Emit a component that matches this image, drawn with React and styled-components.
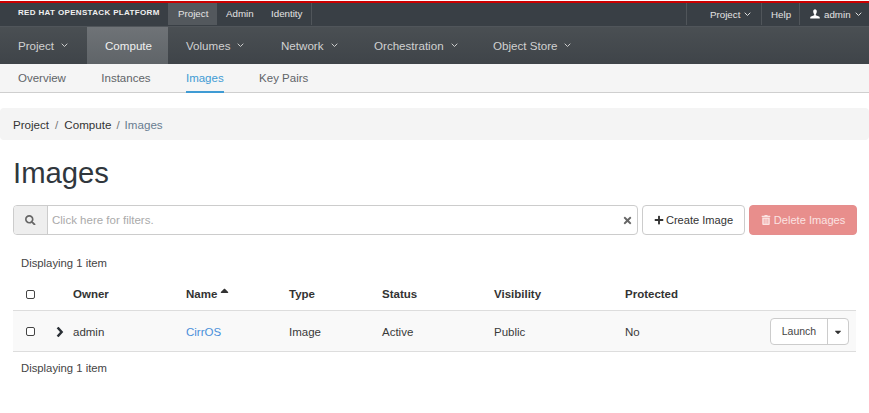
import React from "react";
import styled, { createGlobalStyle } from "styled-components";
import { FaSearch, FaTimes, FaPlus, FaTrashAlt, FaCaretDown, FaCaretUp } from "react-icons/fa";

const GlobalStyle = createGlobalStyle`
  html, body {
    margin: 0;
    padding: 0;
    background: #fff;
    color: #363636;
    font-family: "Liberation Sans", Arial, sans-serif;
    font-size: 13px;
    overflow: hidden;
  }
  * { box-sizing: border-box; }
`;

const Page = styled.div`
  width: 869px;
  height: 413px;
`;

const TopBar = styled.div`
  height: 25px;
  margin-top: 1px;
  border-top: 2px solid #cc0000;
  background: #393f45;
  display: flex;
  align-items: stretch;
  font-size: 9.75px;
  color: #e4e4e4;
`;

const Brand = styled.div`
  width: 168px;
  padding: 3px 0 0 18px;
  font-size: 8px;
  font-weight: 700;
  line-height: 14px;
  letter-spacing: 0.34px;
  color: #f0f0f0;
  white-space: nowrap;
`;

const TopTabs = styled.div`
  display: flex;
  height: 22px;
  width: 144px;
  border-right: 1px solid #50555a;
  margin-right: auto;
`;

const TopTab = styled.div`
  width: ${(p) => p.$w}px;
  padding-left: ${(p) => p.$pad}px;
  line-height: 22px;
  background: ${(p) => (p.$active ? "#53585d" : "transparent")};
`;

const TopRight = styled.div`
  display: flex;
  height: 22px;
`;

const TopItem = styled.div`
  display: flex;
  align-items: center;
  gap: ${(p) => p.$gap || 4}px;
  width: ${(p) => p.$w}px;
  padding-left: ${(p) => p.$pad}px;
  border-left: 1px solid #50555a;
`;

const ThinChevron = ({ size = 7, color = "currentColor" }) => (
  <svg width={size} height={size * 0.6} viewBox="0 0 10 6" fill="none">
    <path d="M1 1l4 4 4-4" stroke={color} strokeWidth="1.4" />
  </svg>
);

const UserIcon = () => (
  <svg width="10" height="10" viewBox="0 0 10 10" fill="#fff">
    <path d="M3.2 2.6C3.2 1.2 3.9.3 5 .3s1.8.9 1.8 2.3c0 1.1-.5 2.2-1 2.7v1l3.2 1.3c.6.3.8.7.8 1.9H.2c0-1.2.2-1.6.8-1.9l3.2-1.3v-1c-.5-.5-1-1.6-1-2.7z" />
  </svg>
);

const BoldChevron = () => (
  <svg width="8" height="11" viewBox="0 0 8 11" fill="none">
    <path d="M1.6 1l4 4.5-4 4.5" stroke="#2b3036" strokeWidth="2.5" />
  </svg>
);

const MainNav = styled.div`
  height: 38px;
  background: linear-gradient(#4a4f53, #3f4449);
  border-top: 1px solid #50555a;
  display: flex;
  font-size: 11.6px;
  color: #d1d1d1;
`;

const MainItem = styled.div`
  display: flex;
  align-items: center;
  gap: 7px;
  width: ${(p) => p.$w}px;
  padding: 0 0 1px ${(p) => p.$pad}px;
  background: ${(p) => (p.$active ? "linear-gradient(#6f7377, #5f6468)" : "transparent")};
  color: ${(p) => (p.$active ? "#f0f0f0" : "#d1d1d1")};
`;

const SubNav = styled.div`
  height: 29px;
  background: #f5f5f5;
  border-bottom: 1px solid #cfcfcf;
  display: flex;
  padding-left: 18px;
  gap: 35.4px;
  font-size: 11.5px;
  color: #5f6468;
`;

const SubItem = styled.div`
  height: 29px;
  line-height: 28px;
  color: ${(p) => (p.$active ? "#3f9bd4" : "#5f6468")};
  border-bottom: ${(p) => (p.$active ? "2px solid #3f9bd4" : "none")};
`;

const Breadcrumb = styled.div`
  margin-top: 15px;
  height: 32px;
  background: #f4f4f4;
  border-radius: 4px;
  padding-left: 13px;
  display: flex;
  align-items: center;
  font-size: 11.6px;
  color: #333;
`;

const Crumb = styled.span`
  color: ${(p) => (p.$current ? "#687c90" : "#333")};
`;

const Slash = styled.span`
  color: #777;
  padding: 0 ${(p) => p.$pad}px;
`;

const Title = styled.h1`
  margin: 17px 0 0 13px;
  height: 33px;
  font-size: 29.25px;
  font-weight: 400;
  line-height: 33px;
  color: #30373d;
`;

const Toolbar = styled.div`
  margin: 15px 12px 0 13px;
  display: flex;
  gap: 4px;
  height: 30px;
`;

const FilterGroup = styled.div`
  flex: 1;
  display: flex;
  border: 1px solid #ccc;
  border-radius: 4px;
  overflow: hidden;
  background: #fff;
`;

const FilterAddon = styled.div`
  width: 34px;
  background: #eee;
  border-right: 1px solid #ccc;
  display: flex;
  align-items: center;
  justify-content: center;
  color: #666;
  font-size: 10.5px;
`;

const FilterText = styled.div`
  flex: 1;
  padding-left: 4px;
  line-height: 28px;
  font-size: 11.5px;
  color: #aaa;
`;

const FilterClear = styled.div`
  width: 15px;
  display: flex;
  align-items: center;
  justify-content: flex-start;
  color: #666;
  font-size: 11px;
`;

const Button = styled.div`
  display: flex;
  align-items: center;
  justify-content: center;
  gap: ${(p) => (p.$danger ? 3 : 2)}px;
  width: ${(p) => p.$w}px;
  border-radius: 4px;
  font-size: 11.1px;
  border: 1px solid ${(p) => (p.$danger ? "#e58e8e" : "#ccc")};
  background: ${(p) => (p.$danger ? "#e88e8c" : "#fff")};
  color: ${(p) => (p.$danger ? "#fbe3e2" : "#333")};
`;

const Count = styled.div`
  margin: ${(p) => p.$mt}px 0 0 21px;
  height: 16px;
  line-height: 16px;
  font-size: 11.3px;
  color: #444;
`;

const Table = styled.div`
  margin: 7px 13px 0;
`;

const Row = styled.div`
  display: grid;
  grid-template-columns: 60px 113px 103px 93px 112px 131px 100px 1fr;
  align-items: center;
  height: ${(p) => p.$h}px;
  padding-top: ${(p) => (p.$body ? 1 : 0)}px;
  font-size: 11.5px;
  color: #3a3a3a;
  background: ${(p) => (p.$body ? "#f9f9f9" : "transparent")};
  border-top: ${(p) => (p.$body ? "1px solid #ddd" : "none")};
  border-bottom: ${(p) => (p.$body ? "1px solid #ddd" : "none")};
`;

const HeadCell = styled.div`
  font-weight: 700;
  color: #333;
  display: flex;
  align-items: center;
  gap: 1px;
`;

const SortCaret = styled(FaCaretUp)`
  width: 13px;
  height: 13px;
  margin-bottom: 8px;
`;

const CheckCell = styled.div`
  display: flex;
  align-items: center;
  position: relative;
  padding-left: 13px;
  height: 100%;
`;

const Check = styled.span`
  width: 9px;
  height: 9px;
  border: 1px solid #444;
  border-radius: 2px;
  background: #fff;
`;

const Expand = styled.span`
  position: absolute;
  left: 43px;
  top: 50%;
  transform: translateY(-50%);
  display: flex;
`;

const NameLink = styled.span`
  color: #4a90d9;
`;

const ActionCell = styled.div`
  display: flex;
  justify-content: flex-end;
  padding-right: 7px;
`;

const SplitButton = styled.div`
  display: flex;
  height: 27px;
  border: 1px solid #ccc;
  border-radius: 4px;
  background: #fff;
  font-size: 10.5px;
  color: #444;
`;

const SplitMain = styled.div`
  width: 57px;
  line-height: 25px;
  text-align: center;
  border-right: 1px solid #ccc;
`;

const SplitCaret = styled.div`
  width: 20px;
  display: flex;
  align-items: center;
  justify-content: center;
  font-size: 10px;
  color: #333;
`;

const topRight = [
  { label: "Project", w: 75, pad: 23, chevron: true },
  { label: "Help", w: 38, pad: 9 },
];

const topTabs = [
  { label: "Project", w: 49, pad: 10, active: true },
  { label: "Admin", w: 45, pad: 9 },
  { label: "Identity", w: 49, pad: 9 },
];

const mainNav = [
  { label: "Project", w: 87, pad: 18, chevron: true },
  { label: "Compute", w: 81, pad: 18, active: true },
  { label: "Volumes", w: 95, pad: 18, chevron: true },
  { label: "Network", w: 93, pad: 18, chevron: true },
  { label: "Orchestration", w: 119, pad: 18, chevron: true },
  { label: "Object Store", w: 120, pad: 18, chevron: true },
];

const subNav = ["Overview", "Instances", "Images", "Key Pairs"];

export default function App() {
  return (
    <Page>
      <GlobalStyle />
      <TopBar>
        <Brand>RED HAT OPENSTACK PLATFORM</Brand>
        <TopTabs>
          {topTabs.map((t) => (
            <TopTab key={t.label} $w={t.w} $pad={t.pad} $active={t.active}>{t.label}</TopTab>
          ))}
        </TopTabs>
        <TopRight>
          {topRight.map((t) => (
            <TopItem key={t.label} $w={t.w} $pad={t.pad}>
              {t.label}
              {t.chevron && <ThinChevron />}
            </TopItem>
          ))}
          <TopItem $w={70} $pad={10} $gap={4}>
            <UserIcon />
            admin
            <ThinChevron />
          </TopItem>
        </TopRight>
      </TopBar>

      <MainNav>
        {mainNav.map((m) => (
          <MainItem key={m.label} $w={m.w} $pad={m.pad} $active={m.active}>
            {m.label}
            {m.chevron && <ThinChevron />}
          </MainItem>
        ))}
      </MainNav>

      <SubNav>
        {subNav.map((s) => (
          <SubItem key={s} $active={s === "Images"}>{s}</SubItem>
        ))}
      </SubNav>

      <Breadcrumb>
        <Crumb>Project</Crumb>
        <Slash $pad={6}>/</Slash>
        <Crumb>Compute</Crumb>
        <Slash $pad={5}>/</Slash>
        <Crumb $current>Images</Crumb>
      </Breadcrumb>

      <Title>Images</Title>

      <Toolbar>
        <FilterGroup>
          <FilterAddon><FaSearch /></FilterAddon>
          <FilterText>Click here for filters.</FilterText>
          <FilterClear><FaTimes /></FilterClear>
        </FilterGroup>
        <Button $w={103}><FaPlus size={10} />Create Image</Button>
        <Button $w={108} $danger><FaTrashAlt size={10} />Delete Images</Button>
      </Toolbar>

      <Count $mt={20}>Displaying 1 item</Count>

      <Table>
        <Row $h={32}>
          <CheckCell><Check /></CheckCell>
          <HeadCell>Owner</HeadCell>
          <HeadCell>Name<SortCaret /></HeadCell>
          <HeadCell>Type</HeadCell>
          <HeadCell>Status</HeadCell>
          <HeadCell>Visibility</HeadCell>
          <HeadCell>Protected</HeadCell>
          <div />
        </Row>
        <Row $h={42} $body>
          <CheckCell>
            <Check />
            <Expand><BoldChevron /></Expand>
          </CheckCell>
          <div>admin</div>
          <NameLink>CirrOS</NameLink>
          <div>Image</div>
          <div>Active</div>
          <div>Public</div>
          <div>No</div>
          <ActionCell>
            <SplitButton>
              <SplitMain>Launch</SplitMain>
              <SplitCaret><FaCaretDown /></SplitCaret>
            </SplitButton>
          </ActionCell>
        </Row>
      </Table>

      <Count $mt={8}>Displaying 1 item</Count>
    </Page>
  );
}
